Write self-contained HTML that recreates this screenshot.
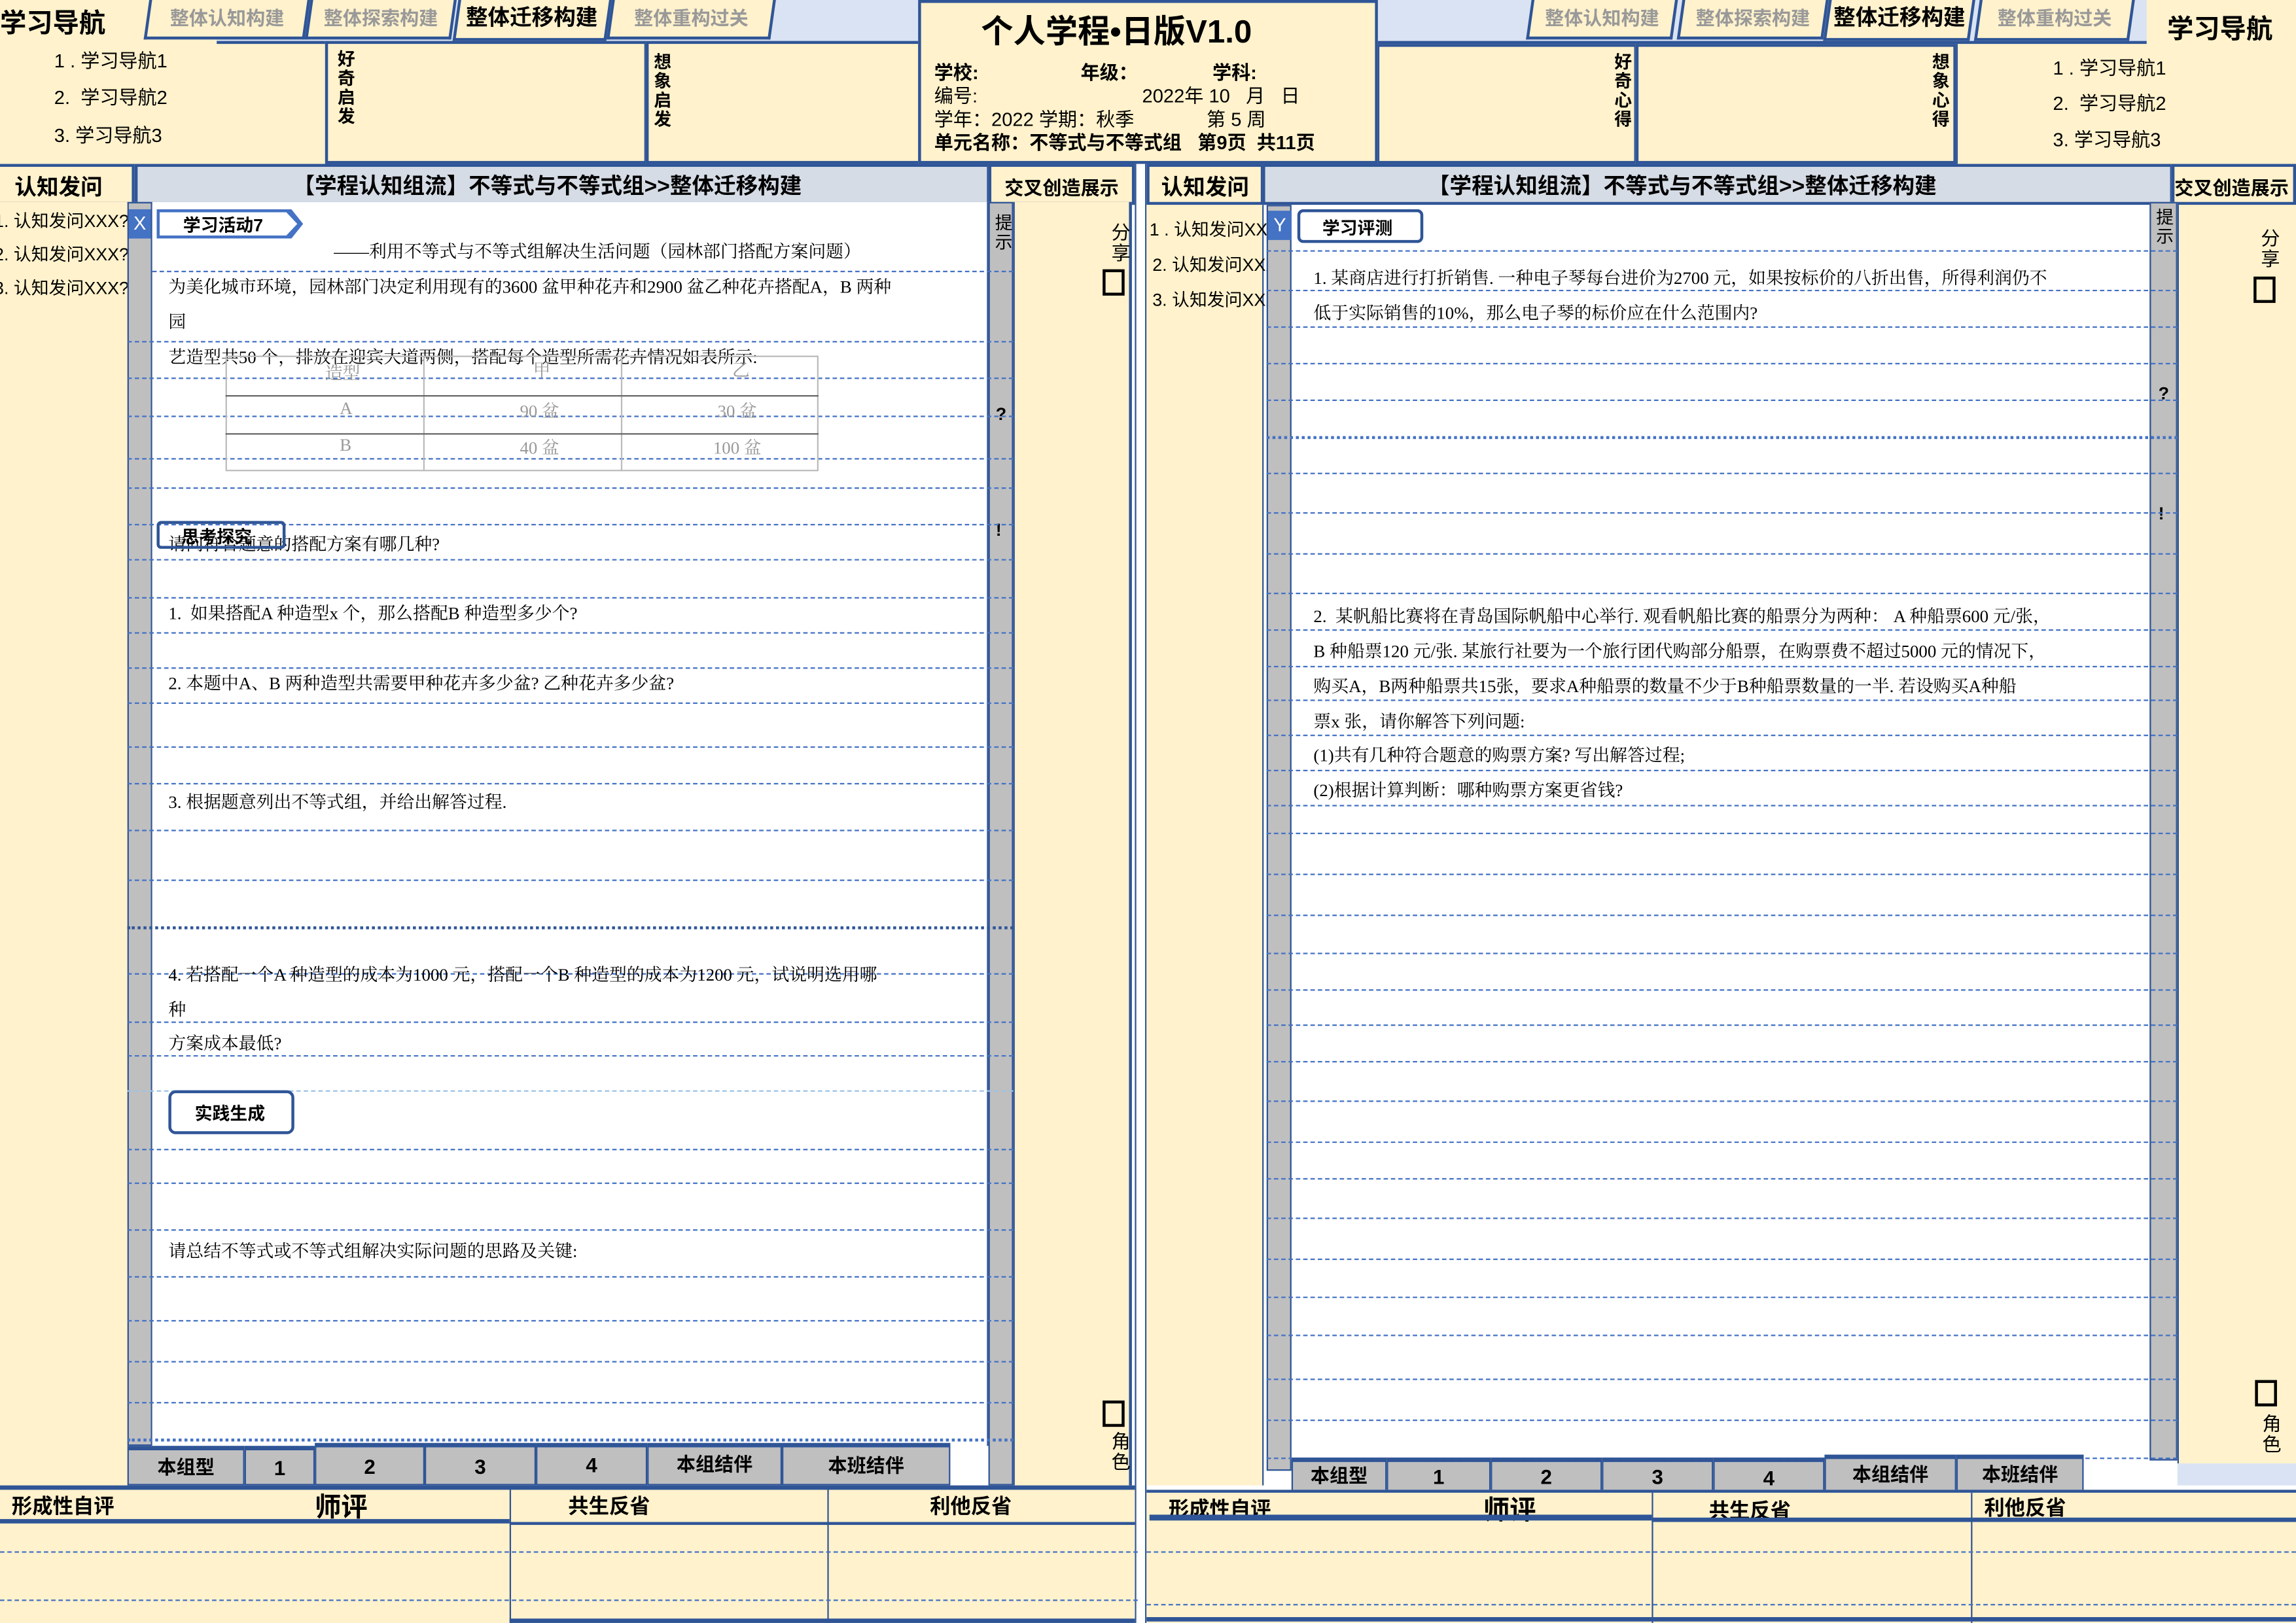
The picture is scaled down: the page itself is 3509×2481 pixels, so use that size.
<!DOCTYPE html>
<html><head><meta charset="utf-8"><style>
*{margin:0;padding:0;box-sizing:border-box}
html,body{width:3509px;height:2481px;overflow:hidden;background:#fff}
#w{position:absolute;left:0;top:0;width:1568px;height:1109px;transform:scale(2.2379,2.2371);transform-origin:0 0;font-family:"Liberation Sans","Noto Sans CJK SC",sans-serif;color:#000}
#w div{position:absolute}
.c{background:#FFF2CC}
.b{border:2px solid #2F5597}
.g{background:#BFBFBF;border:1px solid #2F5597}
.wh{background:#fff}
.d{height:0;border-top:1px dashed #4472C4}
.s{font-family:"Liberation Serif","Noto Serif CJK SC",serif;font-size:12px;white-space:nowrap}
.bo{font-weight:bold}
.tab{background:#FFF2CC;border:2px solid #2F5597;border-top:none;transform:skewX(-8deg);font-size:13px;color:#999;font-weight:bold;text-align:center;line-height:26px}
.tab span{display:inline-block;transform:skewX(8deg)}
.v{writing-mode:vertical-rl;font-size:12px;font-weight:bold;letter-spacing:1px}
.bt{background:#BFBFBF;border:1px solid #2F5597;border-top:3px solid #2F5597;font-size:13px;font-weight:bold;text-align:center}
.nl{font-size:13px}
</style></head><body><div id="w">

<!-- divider between pages -->
<div style="left:775px;top:112px;width:8px;height:997px;background:#fff;border-left:1px solid #2F5597;border-right:1px solid #2F5597"></div>

<!-- LEFT TOP -->
<div class="c" style="left:0;top:0;width:222px;height:112px"></div>
<div class="bo" style="left:0;top:2px;font-size:18px">学习导航</div>
<div class="nl" style="left:37px;top:31px">1 . 学习导航1</div>
<div class="nl" style="left:37px;top:56px">2.&nbsp; 学习导航2</div>
<div class="nl" style="left:37px;top:82px">3. 学习导航3</div>
<div style="left:148px;top:0;width:480px;height:30px;background:#DAE3F3;border-bottom:2px solid #2F5597"></div>
<div class="tab" style="left:100px;top:0;width:110px;height:27px"><span>整体认知构建</span></div>
<div class="tab" style="left:210px;top:0;width:100px;height:27px"><span>整体探索构建</span></div>
<div class="tab" style="left:311px;top:0;width:105px;height:28px;color:#000;font-size:15px"><span>整体迁移构建</span></div>
<div class="tab" style="left:416px;top:0;width:112px;height:27px"><span>整体重构过关</span></div>
<div class="c b" style="left:222px;top:28px;width:220px;height:84px"></div>
<div class="v" style="left:228px;top:34px">好奇启发</div>
<div class="c b" style="left:441px;top:28px;width:188px;height:84px"></div>
<div class="v" style="left:444px;top:36px">想象启发</div>

<!-- RIGHT TOP -->
<div class="c" style="left:1335px;top:0;width:233px;height:112px;border-left:2px solid #2F5597"></div>
<div style="left:940px;top:0;width:526px;height:30px;background:#DAE3F3;border-bottom:2px solid #2F5597"></div>
<div class="tab" style="left:1044px;top:0;width:100px;height:27px"><span>整体认知构建</span></div>
<div class="tab" style="left:1147px;top:0;width:100px;height:27px"><span>整体探索构建</span></div>
<div class="tab" style="left:1247px;top:0;width:100px;height:28px;color:#000;font-size:15px"><span>整体迁移构建</span></div>
<div class="tab" style="left:1350px;top:0;width:106px;height:28px"><span>整体重构过关</span></div>
<div class="c b" style="left:940px;top:30px;width:178px;height:82px"></div>
<div class="v" style="left:1100px;top:36px">好奇心得</div>
<div class="c b" style="left:1117px;top:30px;width:219px;height:82px"></div>
<div class="v" style="left:1317px;top:36px">想象心得</div>
<div class="bo" style="left:1480px;top:6px;font-size:18px">学习导航</div>
<div class="nl" style="left:1402px;top:36px">1 . 学习导航1</div>
<div class="nl" style="left:1402px;top:60px">2.&nbsp; 学习导航2</div>
<div class="nl" style="left:1402px;top:85px">3. 学习导航3</div>

<!-- CENTER HEADER -->
<div class="c b" style="left:627px;top:0;width:314px;height:112px"></div>
<div class="bo" style="left:670px;top:4px;font-size:22px">个人学程•日版V1.0</div>
<div class="bo" style="left:638px;top:39px;font-size:13px">学校:</div>
<div class="bo" style="left:738px;top:39px;font-size:13px">年级：</div>
<div class="bo" style="left:828px;top:39px;font-size:13px">学科:</div>
<div style="left:638px;top:55px;font-size:13px">编号:</div>
<div style="left:780px;top:55px;font-size:13px">2022年 10&nbsp;&nbsp; 月&nbsp;&nbsp; 日</div>
<div style="left:638px;top:71px;font-size:13px">学年：2022 学期：秋季</div>
<div style="left:824px;top:71px;font-size:13px">第 5 周</div>
<div class="bo" style="left:638px;top:87px;font-size:13px">单元名称：不等式与不等式组&nbsp;&nbsp; 第9页&nbsp; 共11页</div>

<!-- LEFT PAGE ROW2 -->
<div class="c b" style="left:-2px;top:112px;width:94px;height:28px"></div>
<div class="bo" style="left:10px;top:117px;font-size:15px">认知发问</div>
<div class="b" style="left:92px;top:112px;width:584px;height:28px;background:#D6DCE5"></div>
<div class="bo" style="left:200px;top:116px;font-size:15px">【学程认知组流】不等式与不等式组&gt;&gt;整体迁移构建</div>
<div class="c b" style="left:675px;top:112px;width:100px;height:28px"></div>
<div class="bo" style="left:686px;top:118px;font-size:13px">交叉创造展示</div>

<!-- LEFT BODY -->
<div class="c" style="left:0;top:138px;width:87px;height:877px"></div>
<div class="nl" style="left:-4px;top:142px;font-size:12px">1. 认知发问XXX?</div>
<div class="nl" style="left:-4px;top:165px;font-size:12px">2. 认知发问XXX?</div>
<div class="nl" style="left:-4px;top:188px;font-size:12px">3. 认知发问XXX?</div>
<div class="g" style="left:87px;top:138px;width:17px;height:850px"></div>
<div style="left:88px;top:143px;width:15px;height:20px;background:#4472C4;color:#fff;font-size:13px;text-align:center;line-height:20px">X</div>
<div class="wh" style="left:104px;top:138px;width:571px;height:850px;border-right:1px solid #2F5597"></div>
<div class="g" style="left:675px;top:138px;width:17px;height:877px"></div>
<div class="v" style="left:677px;top:146px;font-weight:normal">提示</div>
<div class="bo" style="left:680px;top:276px;font-size:12px">?</div>
<div class="bo" style="left:680px;top:355px;font-size:12px">!</div>
<div class="c" style="left:692px;top:138px;width:81px;height:877px;border-left:1px solid #2F5597;border-right:2px solid #2F5597"></div>
<div class="v" style="left:755px;top:152px;font-weight:normal;font-size:13px">分享</div>
<div style="left:753px;top:184px;width:15px;height:18px;border:2px solid #000"></div>
<div style="left:753px;top:957px;width:15px;height:18px;border:2px solid #000"></div>
<div class="v" style="left:755px;top:978px;font-weight:normal;font-size:13px">角色</div>

<div class="d" style="left:104px;top:185px;width:588px"></div>
<div class="d" style="left:87px;top:233px;width:605px"></div>
<div class="d" style="left:87px;top:258px;width:605px"></div>
<div class="d" style="left:87px;top:284px;width:605px"></div>
<div class="d" style="left:87px;top:313px;width:605px"></div>
<div class="d" style="left:87px;top:333px;width:605px"></div>
<div class="d" style="left:87px;top:358px;width:605px"></div>
<div class="d" style="left:87px;top:382px;width:605px"></div>
<div class="d" style="left:87px;top:408px;width:605px"></div>
<div class="d" style="left:87px;top:432px;width:605px"></div>
<div class="d" style="left:87px;top:456px;width:605px"></div>
<div class="d" style="left:87px;top:480px;width:605px"></div>
<div class="d" style="left:87px;top:510px;width:605px"></div>
<div class="d" style="left:87px;top:535px;width:605px"></div>
<div class="d" style="left:87px;top:567px;width:605px"></div>
<div class="d" style="left:87px;top:601px;width:605px"></div>
<div class="d" style="left:87px;top:633px;width:605px;border-top:2px dotted #2F5597"></div>
<div class="d" style="left:87px;top:665px;width:605px"></div>
<div class="d" style="left:87px;top:698px;width:605px"></div>
<div class="d" style="left:87px;top:721px;width:605px"></div>
<div class="d" style="left:87px;top:745px;width:605px;border-top:1px dashed #9DC3E6"></div>
<div class="d" style="left:87px;top:785px;width:605px"></div>
<div class="d" style="left:87px;top:808px;width:605px"></div>
<div class="d" style="left:87px;top:840px;width:605px"></div>
<div class="d" style="left:87px;top:872px;width:605px"></div>
<div class="d" style="left:87px;top:902px;width:605px"></div>
<div class="d" style="left:87px;top:930px;width:605px"></div>
<div class="d" style="left:87px;top:958px;width:605px"></div>
<div class="d" style="left:87px;top:983px;width:605px;border-top:2px dotted #4472C4"></div>

<div style="left:107px;top:143px;width:100px;height:20px;background:#4472C4;clip-path:polygon(0 0,92% 0,100% 50%,92% 100%,0 100%)"></div>
<div style="left:109px;top:145px;width:94px;height:16px;background:#fff;clip-path:polygon(0 0,92% 0,100% 50%,92% 100%,0 100%)"></div>
<div class="bo" style="left:125px;top:145px;font-size:12px">学习活动7</div>
<div class="s" style="left:228px;top:163px">——利用不等式与不等式组解决生活问题（园林部门搭配方案问题）</div>
<div class="s" style="left:115px;top:187px">为美化城市环境，园林部门决定利用现有的3600 盆甲种花卉和2900 盆乙种花卉搭配A，B 两种</div>
<div class="s" style="left:115px;top:211px">园</div>
<div class="s" style="left:115px;top:235px">艺造型共50 个，排放在迎宾大道两侧，搭配每个造型所需花卉情况如表所示:</div>
<div style="left:154px;top:243px;width:405px;height:79px;border:1px solid #bbb"></div>
<div style="left:289px;top:243px;width:1px;height:79px;background:#bbb"></div>
<div style="left:424px;top:243px;width:1px;height:79px;background:#bbb"></div>
<div style="left:154px;top:270px;width:405px;height:1px;background:#666"></div>
<div style="left:154px;top:296px;width:405px;height:1px;background:#666"></div>
<div class="s" style="left:222px;top:246px;color:#999">造型</div>
<div class="s" style="left:364px;top:244px;color:#999">甲</div>
<div class="s" style="left:500px;top:244px;color:#999">乙</div>
<div class="s" style="left:232px;top:272px;color:#999">A</div>
<div class="s" style="left:355px;top:272px;color:#999">90 盆</div>
<div class="s" style="left:490px;top:272px;color:#999">30 盆</div>
<div class="s" style="left:232px;top:297px;color:#999">B</div>
<div class="s" style="left:355px;top:297px;color:#999">40 盆</div>
<div class="s" style="left:487px;top:297px;color:#999">100 盆</div>

<div class="s" style="left:115px;top:363px">请问符合题意的搭配方案有哪几种?</div>
<div style="left:107px;top:356px;width:88px;height:19px;border:2px solid #2F5597;border-radius:3px"></div>
<div class="bo" style="left:124px;top:358px;font-size:12px">思考探究</div>
<div class="s" style="left:115px;top:410px">1.&nbsp; 如果搭配A 种造型x 个，那么搭配B 种造型多少个?</div>
<div class="s" style="left:115px;top:458px">2. 本题中A、B 两种造型共需要甲种花卉多少盆? 乙种花卉多少盆?</div>
<div class="s" style="left:115px;top:539px">3. 根据题意列出不等式组，并给出解答过程.</div>
<div class="s" style="left:115px;top:657px">4. 若搭配一个A 种造型的成本为1000 元，搭配一个B 种造型的成本为1200 元，试说明选用哪</div>
<div class="s" style="left:115px;top:681px">种</div>
<div class="s" style="left:115px;top:704px">方案成本最低?</div>
<div style="left:115px;top:745px;width:86px;height:30px;border:2px solid #2F5597;border-radius:5px;background:#fff"></div>
<div class="bo" style="left:133px;top:752px;font-size:12px">实践生成</div>
<div class="s" style="left:115px;top:846px">请总结不等式或不等式组解决实际问题的思路及关键:</div>

<div class="bt" style="left:87px;top:988px;width:80px;height:27px;line-height:24px">本组型</div>
<div class="bt" style="left:167px;top:988px;width:48px;height:27px;line-height:24px;font-size:14px">1</div>
<div class="bt" style="left:215px;top:986px;width:75px;height:29px;line-height:26px;font-size:14px">2</div>
<div class="bt" style="left:290px;top:986px;width:76px;height:29px;line-height:26px;font-size:14px">3</div>
<div class="bt" style="left:366px;top:986px;width:76px;height:29px;line-height:24px;font-size:14px">4</div>
<div class="bt" style="left:442px;top:986px;width:92px;height:29px;line-height:24px">本组结伴</div>
<div class="bt" style="left:534px;top:986px;width:115px;height:29px;line-height:26px">本班结伴</div>

<!-- LEFT FOOTER -->
<div class="c" style="left:0;top:1015px;width:775px;height:94px;border-top:3px solid #2F5597"></div>
<div class="bo" style="left:8px;top:1019px;font-size:14px">形成性自评</div>
<div class="bo" style="left:215px;top:1016px;font-size:18px">师评</div>
<div style="left:0;top:1038px;width:348px;height:3px;background:#2F5597"></div>
<div style="left:348px;top:1017px;width:1px;height:92px;background:#2F5597"></div>
<div class="bo" style="left:388px;top:1019px;font-size:14px">共生反省</div>
<div style="left:565px;top:1017px;width:1px;height:92px;background:#2F5597"></div>
<div class="bo" style="left:635px;top:1019px;font-size:14px">利他反省</div>
<div style="left:348px;top:1040px;width:427px;height:2px;background:#2F5597"></div>
<div class="d" style="left:0;top:1060px;width:777px"></div>
<div class="d" style="left:0;top:1093px;width:777px"></div>
<div style="left:348px;top:1106px;width:427px;height:3px;background:#2F5597"></div>

<!-- RIGHT PAGE ROW2 -->
<div class="c b" style="left:783px;top:112px;width:80px;height:28px"></div>
<div class="bo" style="left:793px;top:117px;font-size:15px">认知发问</div>
<div class="b" style="left:862px;top:112px;width:622px;height:28px;background:#D6DCE5"></div>
<div class="bo" style="left:975px;top:116px;font-size:15px">【学程认知组流】不等式与不等式组&gt;&gt;整体迁移构建</div>
<div class="c b" style="left:1483px;top:112px;width:85px;height:28px"></div>
<div class="bo" style="left:1485px;top:118px;font-size:13px">交叉创造展示</div>

<div class="c" style="left:783px;top:140px;width:80px;height:875px;border-right:1px solid #2F5597"></div>
<div style="left:785px;top:148px;font-size:12px">1 . 认知发问XXX?</div>
<div style="left:787px;top:172px;font-size:12px">2. 认知发问XXX?</div>
<div style="left:787px;top:196px;font-size:12px">3. 认知发问XXX?</div>
<div class="wh" style="left:865px;top:140px;width:604px;height:858px"></div>
<div class="g" style="left:865px;top:140px;width:17px;height:865px"></div>
<div style="left:866px;top:144px;width:16px;height:20px;background:#4472C4;color:#fff;font-size:13px;text-align:center;line-height:20px">Y</div>
<div class="g" style="left:1468px;top:138px;width:19px;height:860px"></div>
<div class="v" style="left:1470px;top:142px;font-weight:normal">提示</div>
<div class="bo" style="left:1474px;top:262px;font-size:12px">?</div>
<div class="bo" style="left:1474px;top:344px;font-size:12px">!</div>
<div class="c" style="left:1487px;top:140px;width:81px;height:860px;border-left:1px solid #2F5597"></div>
<div class="v" style="left:1540px;top:156px;font-weight:normal;font-size:13px">分享</div>
<div style="left:1539px;top:189px;width:15px;height:18px;border:2px solid #000"></div>
<div style="left:1540px;top:943px;width:15px;height:18px;border:2px solid #000"></div>
<div class="v" style="left:1541px;top:966px;font-weight:normal;font-size:13px">角色</div>
<div style="left:1487px;top:1000px;width:81px;height:15px;background:#DAE3F3"></div>

<div class="d" style="left:865px;top:171px;width:622px"></div>
<div class="d" style="left:865px;top:198px;width:622px"></div>
<div class="d" style="left:865px;top:223px;width:622px"></div>
<div class="d" style="left:865px;top:248px;width:622px"></div>
<div class="d" style="left:865px;top:273px;width:622px"></div>
<div class="d" style="left:865px;top:298px;width:622px;border-top:2px dotted #4472C4"></div>
<div class="d" style="left:865px;top:323px;width:622px"></div>
<div class="d" style="left:865px;top:350px;width:622px"></div>
<div class="d" style="left:865px;top:378px;width:622px"></div>
<div class="d" style="left:865px;top:405px;width:622px"></div>
<div class="d" style="left:865px;top:430px;width:622px"></div>
<div class="d" style="left:865px;top:455px;width:622px"></div>
<div class="d" style="left:865px;top:478px;width:622px"></div>
<div class="d" style="left:865px;top:502px;width:622px"></div>
<div class="d" style="left:865px;top:526px;width:622px"></div>
<div class="d" style="left:865px;top:550px;width:622px"></div>
<div class="d" style="left:865px;top:569px;width:622px"></div>
<div class="d" style="left:865px;top:597px;width:622px"></div>
<div class="d" style="left:865px;top:625px;width:622px"></div>
<div class="d" style="left:865px;top:651px;width:622px"></div>
<div class="d" style="left:865px;top:676px;width:622px"></div>
<div class="d" style="left:865px;top:700px;width:622px"></div>
<div class="d" style="left:865px;top:725px;width:622px"></div>
<div class="d" style="left:865px;top:752px;width:622px"></div>
<div class="d" style="left:865px;top:780px;width:622px"></div>
<div class="d" style="left:865px;top:805px;width:622px"></div>
<div class="d" style="left:865px;top:832px;width:622px"></div>
<div class="d" style="left:865px;top:860px;width:622px"></div>
<div class="d" style="left:865px;top:886px;width:622px"></div>
<div class="d" style="left:865px;top:912px;width:622px"></div>
<div class="d" style="left:865px;top:942px;width:622px"></div>
<div class="d" style="left:865px;top:970px;width:622px"></div>
<div class="d" style="left:865px;top:996px;width:622px"></div>

<div style="left:886px;top:143px;width:86px;height:23px;border:2px solid #2F5597;border-radius:4px;background:#fff"></div>
<div class="bo" style="left:903px;top:147px;font-size:12px">学习评测</div>
<div class="s" style="left:897px;top:181px">1. 某商店进行打折销售. 一种电子琴每台进价为2700 元，如果按标价的八折出售，所得利润仍不</div>
<div class="s" style="left:897px;top:205px">低于实际销售的10%，那么电子琴的标价应在什么范围内?</div>
<div class="s" style="left:897px;top:412px">2.&nbsp; 某帆船比赛将在青岛国际帆船中心举行. 观看帆船比赛的船票分为两种： A 种船票600 元/张，</div>
<div class="s" style="left:897px;top:436px">B 种船票120 元/张. 某旅行社要为一个旅行团代购部分船票，在购票费不超过5000 元的情况下，</div>
<div class="s" style="left:897px;top:460px">购买A，B两种船票共15张，要求A种船票的数量不少于B种船票数量的一半. 若设购买A种船</div>
<div class="s" style="left:897px;top:484px">票x 张，请你解答下列问题:</div>
<div class="s" style="left:897px;top:507px">(1)共有几种符合题意的购票方案? 写出解答过程;</div>
<div class="s" style="left:897px;top:531px">(2)根据计算判断：哪种购票方案更省钱?</div>

<div class="bt" style="left:882px;top:996px;width:65px;height:23px;line-height:20px">本组型</div>
<div class="bt" style="left:947px;top:996px;width:71px;height:23px;line-height:20px;font-size:14px">1</div>
<div class="bt" style="left:1018px;top:996px;width:76px;height:23px;line-height:20px;font-size:14px">2</div>
<div class="bt" style="left:1094px;top:996px;width:76px;height:23px;line-height:20px;font-size:14px">3</div>
<div class="bt" style="left:1170px;top:996px;width:76px;height:23px;line-height:22px;font-size:14px">4</div>
<div class="bt" style="left:1246px;top:994px;width:90px;height:26px;line-height:22px">本组结伴</div>
<div class="bt" style="left:1336px;top:994px;width:87px;height:25px;line-height:22px">本班结伴</div>

<!-- RIGHT FOOTER -->
<div class="c" style="left:783px;top:1018px;width:785px;height:91px;border-top:2px solid #2F5597"></div>
<div class="bo" style="left:798px;top:1021px;font-size:14px">形成性自评</div>
<div class="bo" style="left:1013px;top:1018px;font-size:18px">师评</div>
<div style="left:785px;top:1035px;width:343px;height:4px;background:#2F5597"></div>
<div style="left:1128px;top:1020px;width:1px;height:89px;background:#2F5597"></div>
<div class="bo" style="left:1167px;top:1022px;font-size:14px">共生反省</div>
<div style="left:1346px;top:1020px;width:1px;height:89px;background:#2F5597"></div>
<div class="bo" style="left:1355px;top:1020px;font-size:14px">利他反省</div>
<div style="left:1128px;top:1037px;width:440px;height:3px;background:#2F5597"></div>
<div class="d" style="left:783px;top:1060px;width:785px"></div>
<div class="d" style="left:783px;top:1096px;width:785px"></div>
<div style="left:783px;top:1105px;width:785px;height:3px;background:#2F5597"></div>
</div></body></html>
